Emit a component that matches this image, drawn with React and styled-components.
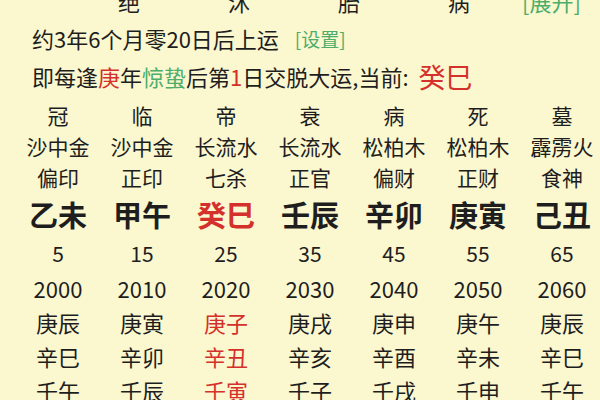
import React from "react";
import styled, { createGlobalStyle } from "styled-components";

const Global = createGlobalStyle`
  html, body { margin: 0; padding: 0; background: #fbf7cf; }
  body { font-family: "Noto Sans CJK SC", "Noto Sans", sans-serif; color: #1e1e1e; }
`;

const Page = styled.div`
  width: 600px;
  height: 400px;
  overflow: hidden;
  background: #fbf7cf;
`;

const TopRow = styled.div`
  display: flex;
  align-items: center;
  height: 30px;
  margin-top: -14px;
  padding-left: 74px;
  font-size: 22px;
`;

const TopCell = styled.span`
  width: 110px;
  text-align: center;
`;

const Link = styled.span`
  color: #4cae6a;
  font-size: ${(p) => p.$size || 19}px;
  margin-left: ${(p) => p.$gap || 0}px;
`;

const InfoLine = styled.div`
  display: flex;
  align-items: center;
  height: ${(p) => p.$h}px;
  padding-left: 32px;
  font-size: 22px;
  white-space: nowrap;
`;

const Red = styled.span`
  color: #d4302c;
  font-size: ${(p) => (p.$size ? p.$size + "px" : "inherit")};
  margin-left: ${(p) => p.$gap || 0}px;
`;

const Green = styled.span`
  color: #4cae6a;
`;

const Grid = styled.div`
  margin-top: 7px;
  padding-left: 16px;
`;

const Row = styled.div`
  display: grid;
  grid-template-columns: repeat(7, 84px);
  height: ${(p) => p.$h}px;
  align-items: center;
  font-size: ${(p) => p.$size}px;
  font-weight: ${(p) => (p.$bold ? 700 : 400)};
`;

const Cell = styled.span`
  text-align: center;
  white-space: nowrap;
  color: ${(p) => (p.$red ? "#d4302c" : "inherit")};
`;

const rows = [
  { h: 32, size: 21, items: ["冠", "临", "帝", "衰", "病", "死", "墓"] },
  { h: 30, size: 21, items: ["沙中金", "沙中金", "长流水", "长流水", "松柏木", "松柏木", "霹雳火"] },
  { h: 32, size: 21, items: ["偏印", "正印", "七杀", "正官", "偏财", "正财", "食神"] },
  { h: 42, size: 29, bold: true, red: true, items: ["乙未", "甲午", "癸巳", "壬辰", "辛卯", "庚寅", "己丑"] },
  { h: 36, size: 21, items: ["5", "15", "25", "35", "45", "55", "65"] },
  { h: 34, size: 22, items: ["2000", "2010", "2020", "2030", "2040", "2050", "2060"] },
  { h: 34, size: 22, red: true, items: ["庚辰", "庚寅", "庚子", "庚戌", "庚申", "庚午", "庚辰"] },
  { h: 34, size: 22, red: true, items: ["辛巳", "辛卯", "辛丑", "辛亥", "辛酉", "辛未", "辛巳"] },
  { h: 34, size: 22, red: true, items: ["壬午", "壬辰", "壬寅", "壬子", "壬戌", "壬申", "壬午"] },
];

export default function App() {
  return (
    <Page>
      <Global />
      <TopRow>
        <TopCell>绝</TopCell>
        <TopCell>沐</TopCell>
        <TopCell>胎</TopCell>
        <TopCell>病</TopCell>
        <Link $gap={8} $size={22}>[展开]</Link>
      </TopRow>
      <InfoLine $h={44}>
        约3年6个月零20日后上运
        <Link $gap={16}>[设置]</Link>
      </InfoLine>
      <InfoLine $h={32}>
        即每逢<Red>庚</Red>年<Green>惊蛰</Green>后第<Red>1</Red>日交脱大运,当前:
        <Red $size={27} $gap={10}>癸巳</Red>
      </InfoLine>
      <Grid>
        {rows.map((r, i) => (
          <Row key={i} $h={r.h} $size={r.size} $bold={r.bold}>
            {r.items.map((t, j) => (
              <Cell key={j} $red={j === 2 && r.red}>
                {t}
              </Cell>
            ))}
          </Row>
        ))}
      </Grid>
    </Page>
  );
}
